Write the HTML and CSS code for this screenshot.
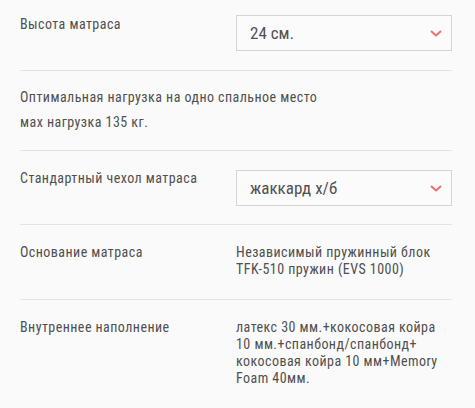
FILE: index.html
```html
<!DOCTYPE html>
<html lang="ru">
<head>
    <meta charset="UTF-8">
    <meta name="viewport" content="width=device-width, initial-scale=1.0">
    <title>Характеристики матраса</title>
    <link rel="stylesheet" href="styles.css">
</head>
<body>
    <div class="specs">
        <div class="spec-row first">
            <div class="spec-label">Высота матраса</div>
            <div class="spec-select">
                <span>24 см.</span>
                <svg class="chevron" width="12" height="7" viewBox="0 0 12 7"><path d="M1 1l5 4.5L11 1" fill="none" stroke="#f26c6c" stroke-width="2"/></svg>
            </div>
        </div>
        <div class="spec-note">
            Оптимальная нагрузка на одно спальное место<br>
            мах нагрузка 135 кг.
        </div>
        <div class="spec-row">
            <div class="spec-label">Стандартный чехол матраса</div>
            <div class="spec-select">
                <span>жаккард х/б</span>
                <svg class="chevron" width="12" height="7" viewBox="0 0 12 7"><path d="M1 1l5 4.5L11 1" fill="none" stroke="#f26c6c" stroke-width="2"/></svg>
            </div>
        </div>
        <div class="spec-row text">
            <div class="spec-label">Основание матраса</div>
            <div class="spec-value">Независимый пружинный блок<br>TFK-510 пружин (EVS 1000)</div>
        </div>
        <div class="spec-row text last">
            <div class="spec-label">Внутреннее наполнение</div>
            <div class="spec-value">латекс 30 мм.+кокосовая койра<br>10 мм.+спанбонд/спанбонд+<br>кокосовая койра 10 мм+Memory<br>Foam 40мм.</div>
        </div>
    </div>
</body>
</html>
```
FILE: styles.css
```css
body {
    margin: 0;
    background-color: #fafafa;
    font-family: Roboto, "Liberation Sans", sans-serif;
    font-stretch: 87.5%;
    letter-spacing: 0.45px;
    color: #505050;
    font-size: 14px;
    line-height: 17px;
}
.specs {
    width: 432px;
    margin-left: 20px;
}
.spec-row {
    display: grid;
    grid-template-columns: 216px 216px;
    padding: 19px 0 18px;
    border-bottom: 1px solid #e3e3e3;
}
.spec-row.first {
    padding: 15px 0 19px;
}
.spec-row.text {
    padding-bottom: 21px;
}
.spec-row.last {
    border-bottom: none;
}
.spec-row.first .spec-label {
    padding-top: 1px;
}
.spec-note {
    padding: 14px 0 15px;
    line-height: 25px;
    border-bottom: 1px solid #e3e3e3;
}
.spec-select {
    box-sizing: border-box;
    height: 36px;
    display: flex;
    align-items: center;
    justify-content: space-between;
    padding: 0 9px 0 13px;
    border: 1px solid #d4d4d4;
    background-color: #fbfbfb;
    font-size: 17px;
    letter-spacing: 0;
}
.chevron {
    display: block;
}
```
